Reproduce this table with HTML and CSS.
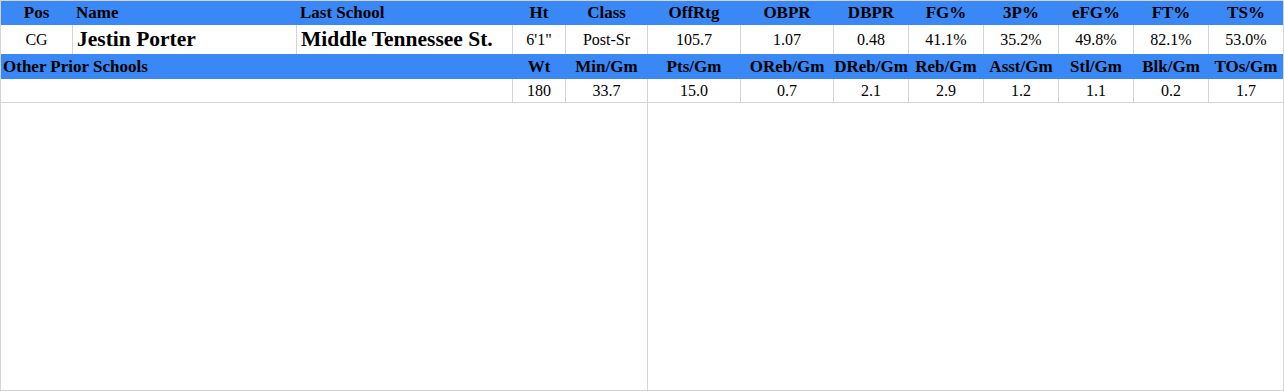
FILE: index.html
```html
<!DOCTYPE html>
<html lang="en">
<head>
<meta charset="utf-8">
<title>Jestin Porter</title>
<link rel="stylesheet" href="styles.css">
</head>
<body>
<div class="card">
  <div class="grid">
    <div class="row head">
      <div class="c ctr">Pos</div>
      <div class="c left">Name</div>
      <div class="c left">Last School</div>
      <div class="c ctr">Ht</div>
      <div class="c ctr">Class</div>
      <div class="c ctr">OffRtg</div>
      <div class="c ctr">OBPR</div>
      <div class="c ctr">DBPR</div>
      <div class="c ctr">FG%</div>
      <div class="c ctr">3P%</div>
      <div class="c ctr">eFG%</div>
      <div class="c ctr">FT%</div>
      <div class="c ctr">TS%</div>
    </div>
    <div class="row data tall">
      <div class="c ctr">CG</div>
      <div class="c left big">Jestin Porter</div>
      <div class="c left big">Middle Tennessee St.</div>
      <div class="c ctr">6'1"</div>
      <div class="c ctr">Post-Sr</div>
      <div class="c ctr">105.7</div>
      <div class="c ctr">1.07</div>
      <div class="c ctr">0.48</div>
      <div class="c ctr">41.1%</div>
      <div class="c ctr">35.2%</div>
      <div class="c ctr">49.8%</div>
      <div class="c ctr">82.1%</div>
      <div class="c ctr">53.0%</div>
    </div>
    <div class="row head head2">
      <div class="c left span3 other">Other Prior Schools</div>
      <div class="c ctr">Wt</div>
      <div class="c ctr">Min/Gm</div>
      <div class="c ctr">Pts/Gm</div>
      <div class="c ctr">OReb/Gm</div>
      <div class="c ctr">DReb/Gm</div>
      <div class="c ctr">Reb/Gm</div>
      <div class="c ctr">Asst/Gm</div>
      <div class="c ctr">Stl/Gm</div>
      <div class="c ctr">Blk/Gm</div>
      <div class="c ctr">TOs/Gm</div>
    </div>
    <div class="row data short">
      <div class="c span3"></div>
      <div class="c ctr">180</div>
      <div class="c ctr">33.7</div>
      <div class="c ctr">15.0</div>
      <div class="c ctr">0.7</div>
      <div class="c ctr">2.1</div>
      <div class="c ctr">2.9</div>
      <div class="c ctr">1.2</div>
      <div class="c ctr">1.1</div>
      <div class="c ctr">0.2</div>
      <div class="c ctr">1.7</div>
    </div>
  </div>
  <div class="panels">
    <div class="panel"></div>
    <div class="panel"></div>
  </div>
</div>
</body>
</html>
```

FILE: styles.css
```css
html, body {
  margin: 0;
  padding: 0;
  background: #ffffff;
}

body {
  font-family: "Liberation Serif", "Times New Roman", serif;
  color: #000000;
}

.card {
  width: 1284px;
  height: 391px;
  box-sizing: border-box;
  border: 1px solid #d4d4d4;
  display: flex;
  flex-direction: column;
}

.grid {
  display: flex;
  flex-direction: column;
  border-bottom: 1px solid #d4d4d4;
}

.row {
  display: grid;
  grid-template-columns: 71px 224px 216px 53px 82px 93px 93px 75px 75px 75px 75px 75px 75px;
}

.c {
  box-sizing: border-box;
  display: flex;
  align-items: center;
  white-space: nowrap;
  overflow: hidden;
}

.c + .c {
  border-left: 1px solid #d4d4d4;
}

.ctr {
  justify-content: center;
}

.left {
  justify-content: flex-start;
  padding-left: 3px;
}

.span3 {
  grid-column: span 3;
}

.head {
  background: #3a87f6;
  font-weight: bold;
  font-size: 17px;
  height: 24px;
}

.head .c + .c {
  border-left-color: transparent;
}

.head2 {
  height: 25px;
}

.data {
  font-size: 16px;
}

.tall {
  height: 29px;
}

.short {
  height: 23px;
}

.big {
  font-size: 21.5px;
  font-weight: bold;
  padding-left: 4px;
}

.other {
  padding-left: 2px;
}

.panels {
  flex: 1;
  display: grid;
  grid-template-columns: 646px 636px;
}

.panel + .panel {
  border-left: 1px solid #d4d4d4;
}
```
